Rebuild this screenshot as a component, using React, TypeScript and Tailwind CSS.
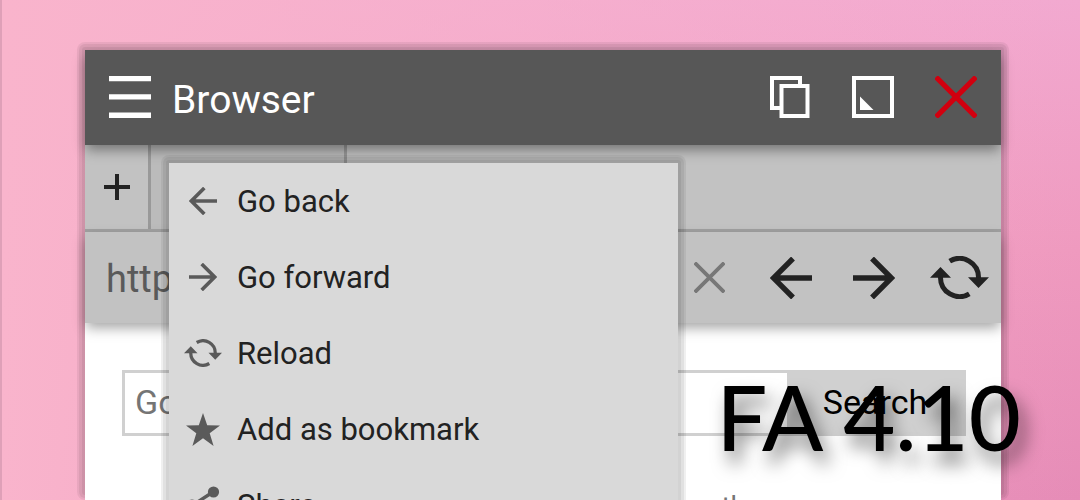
import type { ReactNode } from "react";

type IconProps = { className?: string };

function MenuIcon() {
  return (
    <svg viewBox="0 0 42 42" className="size-[42px]" fill="currentColor" aria-hidden="true">
      <path d="M0 0h42v5.3H0zM0 18.3h42v5.3H0zM0 36.5h42V42H0z" />
    </svg>
  );
}

function WindowsIcon() {
  return (
    <svg viewBox="0 0 42 42" className="size-[42px]" fill="none" stroke="currentColor" strokeWidth="4" aria-hidden="true">
      <path d="M11 32H3V2H31V9M12.5 10H38.5V40H12.5Z" />
    </svg>
  );
}

function ResizeIcon() {
  return (
    <svg viewBox="0 0 42 42" className="size-[42px]" aria-hidden="true">
      <path d="M2 2H40V40H2Z" fill="none" stroke="currentColor" strokeWidth="4" />
      <path d="M8 20.5V34H21.5Z" fill="currentColor" />
    </svg>
  );
}

function CrossIcon({ className }: IconProps) {
  return (
    <svg viewBox="0 0 42 42" className={className} fill="none" stroke="currentColor" strokeWidth="5.2" aria-hidden="true">
      <path d="M1 1L41 41M41 1L1 41" />
    </svg>
  );
}

function ArrowIcon({ className }: IconProps) {
  return (
    <svg viewBox="0 0 42 42" className={className} fill="none" stroke="currentColor" strokeWidth="5.4" aria-hidden="true">
      <path d="M42 21H4M23 1.5L3.5 21L23 40.5" />
    </svg>
  );
}

function ReloadIcon({ className }: IconProps) {
  return (
    <svg viewBox="-1 0 59 43" className={className} aria-hidden="true">
      <g fill="none" stroke="currentColor" strokeWidth="5">
        <path d="M18.7 5.2A19 19 0 0 1 47.5 22" />
        <path d="M38.3 37.8A19 19 0 0 1 9.5 21" />
      </g>
      <path d="M37 21.3H58L47.5 32ZM-1 21.7H20L9.5 11Z" fill="currentColor" />
    </svg>
  );
}

function StarIcon() {
  return (
    <svg viewBox="0 0 34 33" className="h-[33px] w-[34px]" fill="currentColor" aria-hidden="true">
      <path d="M17 0L21.2 12.3L34 12.5L23.7 20.3L27.6 33L17 25.3L6.4 33L10.3 20.3L0 12.5L12.8 12.3Z" />
    </svg>
  );
}

function ShareIcon() {
  return (
    <svg viewBox="0 0 34 38" className="h-[38px] w-[34px]" fill="currentColor" aria-hidden="true">
      <path d="M27 6L7 19L27 32" fill="none" stroke="currentColor" strokeWidth="3.4" />
      <circle cx="27.5" cy="6" r="5.6" />
      <circle cx="6" cy="19" r="5.6" />
      <circle cx="27.5" cy="32" r="5.6" />
    </svg>
  );
}

function ShadowFrame({ children }: { children: ReactNode }) {
  return (
    <div className="h-full rounded-lg bg-black/6 p-0.5">
      <div className="h-full rounded-md bg-black/6 p-[3px]">
        <div className="h-full rounded-[3px] bg-black/6 p-[3px]">{children}</div>
      </div>
    </div>
  );
}

const menuItems: { label: string; icon: ReactNode }[] = [
  { label: "Go back", icon: <ArrowIcon className="size-7" /> },
  { label: "Go forward", icon: <ArrowIcon className="size-7 rotate-180" /> },
  { label: "Reload", icon: <ReloadIcon className="h-7 w-[38px]" /> },
  { label: "Add as bookmark", icon: <StarIcon /> },
  { label: "Share", icon: <ShareIcon /> },
];

function PageMenu() {
  return (
    <div className="absolute top-[105px] left-[76px] z-20 w-[525px]">
      <ShadowFrame>
        <ul className="bg-[#d9d9d9] text-[31px] leading-[38px] text-[#222]">
          {menuItems.map((item) => (
            <li key={item.label}>
              <button type="button" className="flex h-[76px] w-full items-center gap-[15px] px-[15px] text-left">
                <span className="flex w-[38px] justify-center text-[#5a5a5a]">{item.icon}</span>
                <span className="pt-0.5">{item.label}</span>
              </button>
            </li>
          ))}
        </ul>
      </ShadowFrame>
    </div>
  );
}

export default function App() {
  return (
    <div className="relative h-screen overflow-hidden border-l-2 border-[#dfa0b8] bg-[linear-gradient(90deg,#f9b4cc_0%,#f9b4cc00_100%),linear-gradient(180deg,#f2a9d0_0%,#ef9abf_50%,#e68cb7_100%)] pt-[42px] pr-[71px] pl-[75px] font-[Roboto,'Liberation_Sans',sans-serif]">
      <div className="h-full">
        <ShadowFrame>
          <main className="relative flex h-full flex-col bg-white">
            <header className="z-10 flex h-[95px] shrink-0 items-center justify-between bg-[#575757] px-6 pb-0.5 text-white shadow-[0_6px_12px_-1px_rgba(0,0,0,0.4)]">
              <div className="flex items-center gap-[21px]">
                <button type="button" aria-label="Menu"><MenuIcon /></button>
                <h1 className="pt-1.5 text-[39px] leading-[46px]">Browser</h1>
              </div>
              <div className="flex items-center gap-[41px]">
                <button type="button" aria-label="Windows"><WindowsIcon /></button>
                <button type="button" aria-label="Resize"><ResizeIcon /></button>
                <button type="button" aria-label="Close" className="text-[#d1000f]"><CrossIcon className="size-[42px]" /></button>
              </div>
            </header>

            <div className="flex h-[87px] shrink-0 border-b-[3px] border-[#a0a0a0] bg-[#c2c2c2]">
              <button type="button" aria-label="New tab" className="flex w-[66px] items-center justify-center border-r-[3px] border-[#999] text-[#222]">
                <svg viewBox="0 0 26 26" className="size-[26px]" fill="none" stroke="currentColor" strokeWidth="4" aria-hidden="true">
                  <path d="M13 0V26M0 13H26" />
                </svg>
              </button>
              <button type="button" aria-label="Current tab" className="w-[196px] border-r-[3px] border-[#999] bg-[#bbb]" />
            </div>

            <div className="flex h-[91px] shrink-0 items-center bg-[#c2c2c2] pr-3 text-[#222] shadow-[0_6px_12px_-1px_rgba(0,0,0,0.35)]">
              <input
                aria-label="Address"
                defaultValue="http://"
                className="min-w-0 flex-1 bg-transparent pt-0.5 pl-[21px] text-[38px] leading-[46px] text-[#5a5a5a] outline-none"
              />
              <div className="flex items-center gap-[41px]">
                <button type="button" aria-label="Clear" className="mr-1 text-[#777]"><CrossIcon className="size-[31px]" /></button>
                <button type="button" aria-label="Back"><ArrowIcon className="size-[42px]" /></button>
                <button type="button" aria-label="Forward"><ArrowIcon className="size-[42px] rotate-180" /></button>
                <button type="button" aria-label="Reload" className="-ml-1.5"><ReloadIcon className="h-[43px] w-[59px]" /></button>
              </div>
            </div>

            <form className="mt-[47px] mr-[35px] ml-[37px] flex h-[66px] shrink-0 border-[3px] border-[#d0d0d0] text-[34px] leading-10">
              <input
                aria-label="Search the web"
                placeholder="Google"
                className="min-w-0 flex-1 px-2.5 pb-0.5 text-[#757575] outline-none placeholder:text-[#757575]"
              />
              <button type="button" className="w-44 bg-[#d0d0d0] pb-0.5 text-black">Search</button>
            </form>

            <p className="-mb-8 shrink-0 bg-white pt-[55px] pr-[255px] text-right text-[28px] leading-8 text-[#757575]">th</p>

            <PageMenu />
          </main>
        </ShadowFrame>
      </div>

      <p className="absolute right-[59px] bottom-[29px] z-30 font-[Lato,sans-serif] text-[90px] leading-[110px] font-medium whitespace-nowrap text-black [text-shadow:6px_12px_18px_rgba(0,0,0,0.55)]">
        FA 4.10
      </p>
    </div>
  );
}
